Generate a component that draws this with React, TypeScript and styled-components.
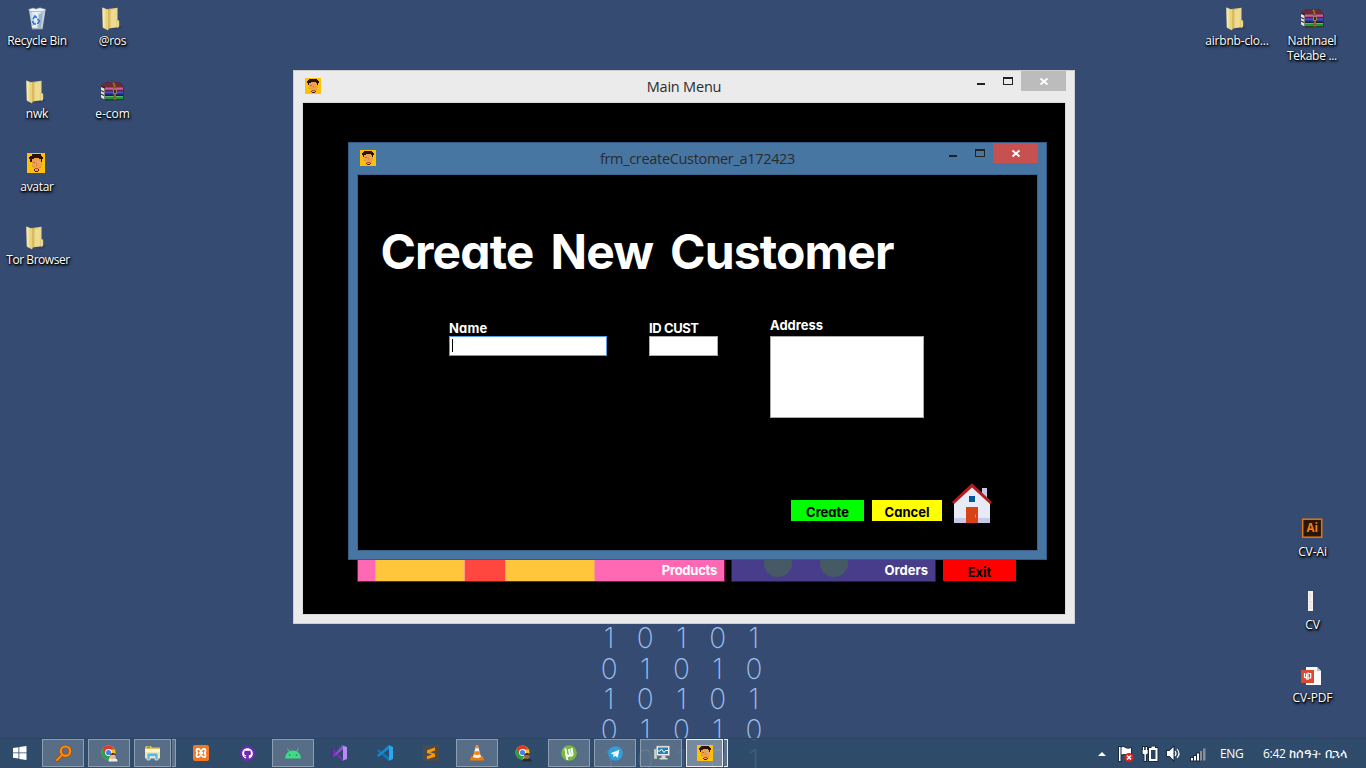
import React from "react";
import styled, { createGlobalStyle, css } from "styled-components";
import { FaGithub } from "react-icons/fa";

const GlobalStyle = createGlobalStyle`
  * { box-sizing: border-box; }
  body { margin: 0; background: #364b72; overflow: hidden; }
`;

const uiFont = `"Open Sans", "Noto Sans", sans-serif`;
const geoFont = css`
  font-family: Inter, "Liberation Sans", sans-serif;
  font-feature-settings: "cv11", "ss03";
  font-weight: 700;
`;

const Desktop = styled.main`
  position: relative;
  width: 1366px;
  height: 768px;
  overflow: hidden;
  background: #364b72;
  font-family: ${uiFont};
`;

const Digits = styled.div`
  position: absolute;
  left: 591px;
  top: 624px;
  display: grid;
  grid-template-columns: repeat(5, 36.2px);
  grid-auto-rows: 30.5px;
  font: 200 28px/29px Inter, sans-serif;
  color: #9dc0ee;
  text-align: center;
`;

/* Desktop shortcuts */

const Shortcut = styled.div<{ $x: number; $y: number }>`
  position: absolute;
  left: ${(p) => p.$x - 45}px;
  top: ${(p) => p.$y}px;
  width: 90px;
  display: flex;
  flex-direction: column;
  align-items: center;
`;

const ShortcutIcon = styled.div<{ $shift?: number }>`
  width: 24px;
  height: 25px;
  padding-top: 1px;
  margin-right: ${(p) => (p.$shift ?? 0) * 2}px;
  svg { display: block; }
`;

const ShortcutLabel = styled.span<{ $ls: number }>`
  margin-top: 2px;
  font-size: 12px;
  line-height: 15px;
  letter-spacing: ${(p) => p.$ls}px;
  color: #fff;
  text-align: center;
  white-space: pre;
  text-shadow: 0 1px 2px #000, 1px 1px 2px #000, 1px 2px 3px rgba(0, 0, 0, 0.6);
`;

/* Windows */

const Window = styled.section<{ $active?: boolean; $x: number; $y: number; $w: number; $h: number }>`
  position: absolute;
  left: ${(p) => p.$x}px;
  top: ${(p) => p.$y}px;
  width: ${(p) => p.$w}px;
  height: ${(p) => p.$h}px;
  display: flex;
  flex-direction: column;
  padding: 0 8px 8px;
  background: ${(p) => (p.$active ? "#4776a3" : "#ebebeb")};
  border: 1px solid ${(p) => (p.$active ? "#335c85" : "#cfcfcf")};
`;

const TitleBar = styled.header`
  display: grid;
  grid-template-columns: 135px 1fr 135px;
  height: 31px;
  flex: none;
`;

const TitleIcon = styled.div`
  padding: 7px 0 0 3px;
  svg { display: block; }
`;

const Title = styled.h2<{ $ls: number }>`
  margin: 0;
  font-size: 14.5px;
  font-weight: 400;
  line-height: 32px;
  letter-spacing: ${(p) => p.$ls}px;
  color: #2b2b2b;
  text-align: center;
  white-space: nowrap;
`;

const Controls = styled.div`
  display: flex;
  justify-content: flex-end;
  height: 20px;
`;

const ControlButton = styled.div<{ $w: number; $bg?: string }>`
  width: ${(p) => p.$w}px;
  height: 20px;
  background: ${(p) => p.$bg ?? "transparent"};
  svg { display: block; }
`;

const WindowBody = styled.div<{ $line: string }>`
  flex: 1;
  display: flex;
  flex-direction: column;
  border: 1px solid ${(p) => p.$line};
  background: #000;
`;

/* Main menu tiles */

const TileRow = styled.div`
  display: flex;
  margin-top: auto;
  padding: 0 0 32px 54px;
  gap: 6px;
`;

const Tile = styled.div<{ $w: number; $bg: string; $line: string }>`
  position: relative;
  width: ${(p) => p.$w}px;
  height: 42px;
  display: flex;
  justify-content: flex-end;
  background: ${(p) => p.$bg};
  border: solid ${(p) => p.$line};
  border-width: 0 1px 1px;
  overflow: hidden;
`;

const Stripe = styled.div<{ $w: number; $bg: string }>`
  width: ${(p) => p.$w}px;
  background: ${(p) => p.$bg};
  border-left: 1px solid #ff9b7e;
`;

const Stripes = styled.div`
  display: flex;
  margin: 0 auto 0 17px;
`;

const Wheel = styled.div`
  width: 28px;
  height: 28px;
  margin-top: 9px;
  border-radius: 50%;
  background: #455a64;
`;

const Wheels = styled.div`
  display: flex;
  gap: 28px;
  margin: 0 auto 0 32px;
`;

const TileText = styled.span<{ $ls?: number }>`
  ${geoFont}
  font-size: 13px;
  line-height: 16px;
  letter-spacing: ${(p) => p.$ls ?? 0}px;
  align-self: flex-end;
  padding: 0 7px 3px 0;
  color: #fff;
`;

const ExitTile = styled.div`
  ${geoFont}
  width: 73px;
  height: 41px;
  margin-left: 1px;
  display: flex;
  align-items: flex-end;
  justify-content: center;
  font-size: 13px;
  line-height: 16px;
  padding-bottom: 1px;
  background: #f00;
  color: #000;
`;

/* Customer form */

const FormTitle = styled.h1`
  ${geoFont}
  margin: 47px 0 0 22.5px;
  font-size: 48px;
  line-height: 60px;
  letter-spacing: -0.9px;
  word-spacing: 6.5px;
  color: #fff;
  white-space: nowrap;
`;

const Fields = styled.div`
  display: flex;
  margin: 34px 0 0 91px;
`;

const Field = styled.label<{ $gap: number; $lift?: number; $ls?: number }>`
  ${geoFont}
  display: flex;
  flex-direction: column;
  margin-right: ${(p) => p.$gap}px;
  font-size: 13px;
  line-height: 16px;
  letter-spacing: ${(p) => p.$ls ?? 0}px;
  color: #fff;
  span {
    display: block;
    height: 20px;
    padding-top: ${(p) => 4 - (p.$lift ?? 0)}px;
    white-space: nowrap;
  }
`;

const Input = styled.div<{ $w: number; $h: number; $focus?: boolean }>`
  width: ${(p) => p.$w}px;
  height: ${(p) => p.$h}px;
  padding: 2px;
  background: #fff;
  border: 1px solid ${(p) => (p.$focus ? "#569de5" : "#ababab")};
`;

const Caret = styled.div`
  width: 1px;
  height: 13px;
  background: #000;
`;

const Actions = styled.div`
  display: flex;
  align-items: flex-start;
  margin: 61px 0 0 433px;
`;

const ActionButton = styled.div<{ $w: number; $bg: string }>`
  ${geoFont}
  width: ${(p) => p.$w}px;
  height: 21px;
  margin: 21px 8px 0 0;
  padding-top: 4px;
  font-size: 13px;
  line-height: 16px;
  text-align: center;
  background: ${(p) => p.$bg};
  color: #000;
`;

const HomeButton = styled.div`
  margin-left: -2px;
  svg { display: block; }
`;

/* Taskbar */

const Taskbar = styled.footer`
  position: absolute;
  left: 0;
  right: 0;
  bottom: 0;
  height: 30px;
  display: flex;
  background: linear-gradient(rgba(45, 76, 107, 0.84), rgba(46, 75, 103, 0.82));
  border-top: 1px solid #2b4462;
`;

const Start = styled.div`
  width: 40px;
  padding: 7px 0 0 13px;
  svg { display: block; }
`;

const Slot = styled.div`
  width: 46px;
  height: 29px;
  padding: 0 2px;
  display: flex;
`;

const TaskButton = styled.div<{ $open?: boolean; $active?: boolean; $stack?: boolean }>`
  width: ${(p) => (p.$stack ? 38 : 42)}px;
  height: 28px;
  display: flex;
  align-items: center;
  justify-content: center;
  border: 1px solid ${(p) => (p.$active ? "#e9edf2" : p.$open ? "#8d9db2" : "transparent")};
  background: ${(p) => (p.$active ? "rgba(190,200,212,.5)" : p.$open ? "rgba(160,170,185,.36)" : "none")};
  svg { display: block; }
`;

const StackEdge = styled.div<{ $active?: boolean }>`
  width: 4px;
  height: 28px;
  border: 1px solid ${(p) => (p.$active ? "#e9edf2" : "#8d9db2")};
  border-left: 0;
  margin-left: 1px;
  background: rgba(160, 170, 185, 0.4);
`;

const Tray = styled.div`
  display: flex;
  margin-left: auto;
  height: 29px;
  align-items: center;
  color: #fff;
`;

const TrayGlyphs = styled.div`
  margin-right: 14px;
  svg { display: block; }
`;

const TrayText = styled.span<{ $w: number; $gap: number; $ls: number }>`
  width: ${(p) => p.$w}px;
  margin-right: ${(p) => p.$gap}px;
  font-size: 12px;
  line-height: 29px;
  letter-spacing: ${(p) => p.$ls}px;
  white-space: nowrap;
`;

const Amharic = styled.span`
  margin-left: 1px;
  font-size: 12.5px;
  letter-spacing: 0;
`;

/* Icons */

const Avatar = ({ w = 16, h = 16 }: { w?: number; h?: number }) => (
  <svg width={w} height={h} viewBox="0 0 16 16" preserveAspectRatio="none" shapeRendering="crispEdges">
    <rect width="16" height="16" fill="#ffc107" />
    <path d="M4 4h9v6h-1v2h-1v2h-1v1H7v-1H6v-2H5v-2H4z" fill="#f0a04c" />
    <path d="M3 7V5H2V3h1V2h1V1h8v1h1v1h1v2h-1v2h-1V5h-1V4H6v1H4v2z" fill="#2b1208" />
    <path d="M5 7h2v1H5z" fill="#c06a2c" />
    <path d="M9 7h3v1H9z" fill="#e0b07a" />
    <path d="M8 7h1v3H8z" fill="#e08c3a" />
    <path d="M4 10h1v1H4zM11 11h1v1h-1z" fill="#d98a38" />
    <path d="M7 12h3v1H7z" fill="#a65a2a" />
    <path d="M6 13h1v1H6zM10 13h1v1h-1zM7 14h3v1H7z" fill="#4a2412" />
  </svg>
);

const Folder = () => (
  <svg width="24" height="24" viewBox="0 0 24 24">
    <defs>
      <linearGradient id="fold" x1="0" x2="1">
        <stop offset="0" stopColor="#fdf2b4" />
        <stop offset="1" stopColor="#e2c667" />
      </linearGradient>
      <linearGradient id="foldBack" x1="0" x2="1">
        <stop offset="0" stopColor="#b99c4a" />
        <stop offset="1" stopColor="#f3e4a0" />
      </linearGradient>
    </defs>
    <path d="M19 19l4 1-6 3-7-1z" fill="#26385a" opacity=".5" />
    <path d="M7 2L17.500 .8V13l1.500 1v6L9 21.500z" fill="url(#foldBack)" />
    <path d="M9.500 2.800l7-1V20l-7 1z" fill="#eedb92" />
    <path d="M17 13l2 1v5.500L17 21z" fill="#f5e6a2" stroke="#c4a852" strokeWidth=".5" />
    <path d="M2.500 .8L8 3v20L3 20.500z" fill="url(#fold)" stroke="#f8ecb0" strokeWidth=".5" />
    <path d="M8 3l2.500-.5V20L8 22.500z" fill="#d9bc62" />
  </svg>
);

const RecycleBin = () => (
  <svg width="24" height="24" viewBox="0 0 24 24">
    <path d="M4 3l16.500 0L17.500 22H7z" fill="#c5d3df" />
    <path d="M7 4l2 17h3l1-14 5-3z" fill="#e9f0f5" opacity=".8" />
    <path d="M14 8l4-3-2 16h-3z" fill="#8fa6bb" opacity=".7" />
    <path d="M3.500 2.500L8 1l3 1 4-1.200 6 1.700-2 1.800-14 .2z" fill="#f2f6f8" stroke="#8496a8" strokeWidth=".6" />
    <path d="M7 10l5 2M10 5l3 6M13 18l2-5M7 20l5-2" stroke="#fff" strokeWidth=".9" />
    <path d="M8 12l2-3 2 2M7.500 14l1.500 3h2M12.500 17l2-3-2-2" fill="none" stroke="#2f74cf" strokeWidth="1.700" />
    <path d="M7 22h10.500" stroke="#7b8b9b" />
  </svg>
);

const Archive = () => (
  <svg width="24" height="24" viewBox="0 0 24 24">
    <path d="M1 6l4-3.500h15L23.500 7v13l-18 .5L1 17z" fill="#2a1c22" />
    <path d="M1 6l4-3.500h15L23.500 7H4z" fill="#6c2a36" />
    <path d="M1 7l3.500 1.500v11L1 17.500z" fill="#e3e3e3" />
    <path d="M1 10.500l3 1.500M1 14l3 1.500" stroke="#35303a" strokeWidth="1.300" />
    <path d="M5 7.500h18v2.800H5z" fill="#c2458f" />
    <path d="M5 11.500h18v3H5z" fill="#2535c6" />
    <path d="M5 16h18v3.300H5z" fill="#1e9a35" />
    <path d="M5 8h18M5 12h18M5 16.500h18" stroke="#fff" strokeOpacity=".35" strokeWidth=".8" />
    <path d="M12 2.500h3l1 4.500v13h-2.500V7z" fill="#7c4b22" />
    <path d="M13.500 3l1.500 5v11" stroke="#c69440" strokeDasharray="1.500 1" fill="none" />
    <path d="M13.500 9.500h3v4h-3z" fill="#3d2a1c" stroke="#b89e5b" strokeWidth=".7" />
  </svg>
);

const Illustrator = () => (
  <svg width="24" height="24" viewBox="0 0 24 24">
    <rect x="2.700" y="1.200" width="19" height="18" fill="#2b1503" stroke="#dd7718" strokeWidth="1.500" />
    <text x="12.200" y="14" textAnchor="middle" fontFamily="Open Sans" fontWeight="700" fontSize="11.500" fill="#f57f17">Ai</text>
  </svg>
);

const Strip = () => (
  <svg width="24" height="24" viewBox="0 0 24 24">
    <rect x="8" y="0" width="5" height="20" fill="#f5f2f2" />
    <path d="M9 3h2M9 5h3M9 8h2M9 11h3M9 14h2M9 17h3" stroke="#d4cdcd" strokeWidth=".7" />
  </svg>
);

const PdfFile = () => (
  <svg width="24" height="24" viewBox="0 0 24 24">
    <path d="M6 3h11l4 4v14H6z" fill="#fafafa" />
    <path d="M17 3l4 4h-4z" fill="#b9c0cb" />
    <rect x="1" y="6" width="13" height="13" fill="#d84b2f" />
    <path d="M4.500 9v5M6.500 9.500v6M8 8.500v7.500M8 9.500h2.700v4.500H8M4.500 13.500h2" fill="none" stroke="#fff" strokeWidth="1.200" />
  </svg>
);

const House = () => (
  <svg width="48" height="44" viewBox="0 0 48 44">
    <path d="M42 39H6V23L24 6l18 17z" fill="#e8eaf6" />
    <path d="M39 21l-5-5V9h5zM6 39h36v5H6z" fill="#c5cae9" />
    <path d="M24 4.300L4 22.900l2 2.200L24 8.400l18 16.700 2-2.200z" fill="#b71c1c" />
    <path d="M18 28h12v16H18z" fill="#d84315" />
    <path d="M21 17h6v6h-6z" fill="#01579b" />
    <rect x="27" y="35.500" width="1" height="3" rx=".5" fill="#ff8a65" />
  </svg>
);

const Minimise = () => (
  <svg width="27" height="20"><path d="M9 13h8" stroke="#222" strokeWidth="2" /></svg>
);
const Maximise = () => (
  <svg width="26" height="20" shapeRendering="crispEdges">
    <path d="M8.500 7.500h9v6h-9z" fill="none" stroke="#222" />
    <path d="M8 6h10v2H8z" fill="#222" />
  </svg>
);
const CloseMark = () => (
  <svg width="45" height="20"><path d="M19.500 7.500l7 6M26.500 7.500l-7 6" stroke="#fff" strokeWidth="1.800" /></svg>
);

const WindowsLogo = () => (
  <svg width="14" height="14" viewBox="0 0 14 14" fill="#fff">
    <path d="M0 2l5.500-.8v5.300H0zM6.300 1.100L13.500 0v6.500H6.300zM0 7.300h5.500v5.300L0 11.800zM6.300 7.300h7.200V14l-7.200-1.100z" />
  </svg>
);

const Finder = () => (
  <svg width="17" height="17" viewBox="0 0 17 17" fill="none">
    <path d="M7 10L2 15" stroke="#a34a00" strokeWidth="3.400" strokeLinecap="round" />
    <circle cx="10.500" cy="6.200" r="4.700" stroke="#a34a00" strokeWidth="3.200" />
    <path d="M7 10L2 15" stroke="#ff8a10" strokeWidth="2" strokeLinecap="round" />
    <circle cx="10.500" cy="6.200" r="4.700" stroke="#ff8a10" strokeWidth="2.200" />
  </svg>
);

const Chrome = ({ shirt, skin }: { shirt: string; skin: string }) => (
  <svg width="17" height="17" viewBox="0 0 17 17">
    <circle cx="7.500" cy="7.500" r="7" fill="#fbc116" />
    <path d="M1.440 4A7 7 0 0 0 7.500 14.500L9.500 10 6 9z" fill="#29a04a" />
    <path d="M1.440 4A7 7 0 0 1 13.560 4.500H7.500L4.500 9z" fill="#e0392b" />
    <circle cx="7.500" cy="7.500" r="3.400" fill="#fff" />
    <circle cx="7.500" cy="7.500" r="2.600" fill="#3f82ee" />
    <path d="M7.500 16.500c0-3 2-3.500 4.500-3.500s4.500.5 4.500 3.500z" fill={shirt} />
    <circle cx="12" cy="11.200" r="2.700" fill={skin} />
    <path d="M9 11c0-4 6-4 6 0l-1-1.200h-4z" fill="#2c1b16" />
  </svg>
);

const Explorer = () => (
  <svg width="17" height="16" viewBox="0 0 17 16">
    <path d="M1 2.500L2 1h5l1 1.500h8v10H1z" fill="#dcc067" />
    <path d="M3 1.500h3v1.500H3z" fill="#4caf50" />
    <path d="M1 4h15v9.500H1z" fill="#f6e7a0" />
    <path d="M1 4h15v3H1z" fill="#fdf5c8" />
    <path d="M3 15V9.500Q3 8 4.500 8h8Q14 8 14 9.500V15h-3v-3.500H6V15z" fill="#61b6e8" stroke="#d9f0fc" strokeWidth=".7" />
  </svg>
);

const Xampp = () => (
  <svg width="16" height="16" viewBox="0 0 16 16" fill="none">
    <rect width="16" height="16" rx="2" fill="#f37623" />
    <path d="M3.500 5.500V5Q3.500 3.800 5 3.800q1.200 0 1.700 1L8 6.500l1.300-1.700q.5-1 1.700-1 1.500 0 1.500 1.400Q12.500 7 11.500 8q1 .8 1 2.500 0 1.700-1.500 1.700-1.200 0-1.700-1L8 9.500l-1.300 1.700q-.5 1-1.700 1-1.500 0-1.500-1.700Q3.500 8.800 4.500 8q-1-.8-1-2.500zM6 8h4" stroke="#fff" strokeWidth="1.800" strokeLinejoin="round" />
  </svg>
);

const GithubBadge = styled.div`
  width: 15px;
  height: 15px;
  display: flex;
  align-items: center;
  justify-content: center;
  border-radius: 50%;
  background: #6e2cab;
  color: #fff;
`;

const Android = () => (
  <svg width="18" height="16" viewBox="0 0 18 16">
    <path d="M1 13.500a8 8 0 0 1 16 0z" fill="#3ddc84" />
    <path d="M5.500 7L3.500 3.500M12.500 7l2-3.500" stroke="#3ddc84" strokeWidth=".9" />
    <circle cx="5.500" cy="10" r=".8" fill="#3b5f72" />
    <circle cx="12.500" cy="10" r=".8" fill="#3b5f72" />
  </svg>
);

const VisualStudio = () => (
  <svg width="16" height="16" viewBox="0 0 16 16">
    <path d="M0 4.200L1.500 3.600 12 13.500V16L11 15.800 4 9.500 1.500 12.300 0 11.800z" fill="#6c33af" />
    <path d="M0 11.800V4.200l1.500-.6V12.300z" fill="#52218a" />
    <path d="M1.500 12.300L11 .2 12 0v4.500L5 10z" fill="#8950cc" />
    <path d="M11 .2L16 2v12l-5 1.900c.700-.2 1-.5 1-1V1C12 .6 11.700.3 11 .2z" fill="#b98af0" />
  </svg>
);

const VsCode = () => (
  <svg width="16" height="16" viewBox="0 0 16 16">
    <path d="M.4 5.200l1.200-1 10.400 8V16L.4 6z" fill="#0d78bd" />
    <path d="M.4 10.900l1.200 1L12 4V0L.4 10z" fill="#1389ce" />
    <path d="M11.500 0L16 2v12l-4.500 2c.400-.2.500-.5.500-1V1c0-.5-.1-.8-.5-1z" fill="#29a8f2" />
  </svg>
);

const Sublime = () => (
  <svg width="16" height="16" viewBox="0 0 16 16">
    <rect width="16" height="16" rx="1" fill="#4b4b4b" />
    <path d="M4 5.200L12 2.600v3L7 7.200l5 1.500v3L4 14.200v-3l5-1.600-5-1.500z" fill="#ff9800" />
  </svg>
);

const Vlc = () => (
  <svg width="16" height="16" viewBox="0 0 16 16">
    <path d="M1 14.500L2.500 11h11l1.500 3.500v1H1z" fill="#ef7b0b" />
    <path d="M7 .5h2L12 12q-4 2-8 0z" fill="#f4f4f4" />
    <path d="M7 .5h2l.7 2.800H6.300zM5.500 6.300h5l.7 3q-3.200 1.400-6.400 0z" fill="#f58412" />
  </svg>
);

const Utorrent = () => (
  <svg width="16" height="16" viewBox="0 0 16 16">
    <circle cx="8" cy="8" r="7.800" fill="#75b943" />
    <path d="M4.300 3.500l1 5.500c.5 3 3.900 2.500 3.500-.5L8 4M8.800 8.500c.5 3 2.800 2.500 2.700.5l-1-6" fill="none" stroke="#fff" strokeWidth="2" />
    <path d="M5 9l1.500 6" stroke="#fff" strokeWidth="1.700" />
  </svg>
);

const Telegram = () => (
  <svg width="15" height="15" viewBox="0 0 15 15">
    <circle cx="7.500" cy="7.500" r="7.300" fill="#2ca1de" />
    <path d="M2.700 7.300l8.600-3.600-1.500 8-2.500-1.900-1.500 1.500-.5-2.700z" fill="#fff" />
    <path d="M5.300 8.600L10 5.200 6.400 9.200l-.6 2.100z" fill="#bddff1" />
  </svg>
);

const Monitor = () => (
  <svg width="17" height="16" viewBox="0 0 17 16">
    <path d="M1 4h3v10H1z" fill="#cdd5c9" stroke="#7d8985" strokeWidth=".5" />
    <path d="M3.500 1h13v9.500h-13z" fill="#f0f0ec" stroke="#9da5a9" strokeWidth=".6" />
    <path d="M5 2.500h10V9H5z" fill="#2580b7" />
    <path d="M5 6h2l1.500-2L11 7.500l1.500-2H15" fill="none" stroke="#eff" strokeWidth="1" />
    <path d="M8.500 10.500h4V13h2v1.500h-8V13h2z" fill="#d6dad7" />
  </svg>
);

const TrayIcons = () => (
  <svg width="116" height="29" viewBox="0 0 116 29">
    <path d="M8 17l4-4 4 4z" fill="#fff" />
    <g stroke="#17283b" strokeWidth="1.800" paintOrder="stroke" fill="#fff">
      <path d="M29 8h1.500v14H29zM31.500 8.500c2-1 3 0 4.500.7s3 .6 5-.2v7c-2 .8-3.500 0-5-.6s-2.500-.6-4.500.2z" />
      <path d="M59 9h2.500V7.500h3.500V9h2.500v13H59z" />
      <path d="M53 8h1.200v3h1.500V8H57v3h.7v3.500l-1.800 1V22h-1.400v-6.500l-1.900-1V11h.4z" />
      <path d="M77 12h2.500L83.500 8v13l-4-4H77z" />
      <path d="M101 19h2v2.500h-2zM104 17h2v4.500h-2zM107 14.500h2v7h-2z" />
    </g>
    <path d="M61 11h4.500v9H61z" fill="#294460" />
    <path d="M85 12q2 2.500 0 5M87 10q4 4.500 0 9" fill="none" stroke="#fff" strokeWidth="1.100" />
    <path d="M110 12h2v9.500h-2zM113 9.500h2.500v12H113z" fill="#8d8d8d" />
    <circle cx="39" cy="18.500" r="4.600" fill="#de2020" />
    <path d="M37 16.500l4 4M41 16.500l-4 4" stroke="#fff" strokeWidth="1.500" />
  </svg>
);

function AvatarShortcut() {
  return (
    <svg width="24" height="24" viewBox="0 0 24 24">
      <svg x="2" y="0">
        <Avatar w={18} h={20} />
      </svg>
    </svg>
  );
}

const shortcuts = [
  { x: 37, y: 6, label: "Recycle Bin", icon: <RecycleBin />, shift: 0, ls: -0.28 },
  { x: 112.500, y: 6, label: "@ros", icon: <Folder />, shift: 1, ls: -0.3 },
  { x: 37, y: 79, label: "nwk", icon: <Folder />, shift: 1, ls: -0.2 },
  { x: 112.500, y: 79, label: "e-com", icon: <Archive />, shift: 0.500, ls: 0 },
  { x: 37, y: 152, label: "avatar", icon: <AvatarShortcut />, shift: 0, ls: -0.3 },
  { x: 38, y: 225, label: "Tor Browser", icon: <Folder />, shift: 2, ls: -0.45 },
  { x: 1237, y: 6, label: "airbnb-clo...", icon: <Folder />, shift: 1, ls: -0.2 },
  { x: 1312, y: 6, label: "Nathnael\nTekabe ...", icon: <Archive />, shift: 0, ls: -0.3 },
  { x: 1312.500, y: 517, label: "CV-Ai", icon: <Illustrator />, shift: 0.500, ls: -0.1 },
  { x: 1312.500, y: 590, label: "CV", icon: <Strip />, shift: 0.500, ls: -0.2 },
  { x: 1312.500, y: 663, label: "CV-PDF", icon: <PdfFile />, shift: 0.500, ls: -0.15 },
];

type Task = { icon: React.ReactNode; open?: boolean; active?: boolean; stack?: boolean };

const tasks: Task[] = [
  { icon: <Finder />, open: true },
  { icon: <Chrome shirt="#ececec" skin="#e8b796" />, open: true },
  { icon: <Explorer />, open: true, stack: true },
  { icon: <Xampp /> },
  { icon: <GithubBadge><FaGithub size={11} /></GithubBadge> },
  { icon: <Android />, open: true },
  { icon: <VisualStudio /> },
  { icon: <VsCode /> },
  { icon: <Sublime /> },
  { icon: <Vlc />, open: true },
  { icon: <Chrome shirt="#2b2b2b" skin="#8d6a5a" /> },
  { icon: <Utorrent />, open: true },
  { icon: <Telegram />, open: true },
  { icon: <Monitor />, open: true },
  { icon: <Avatar />, open: true, active: true, stack: true },
];

const bits = Array.from({ length: 25 }, (_, i) => (i % 2 === 0 ? "1" : "0"));

const WindowHeader = ({ title, ls, closeColor }: { title: string; ls: number; closeColor: string }) => (
  <TitleBar>
    <TitleIcon><Avatar /></TitleIcon>
    <Title $ls={ls}>{title}</Title>
    <Controls>
      <ControlButton $w={27}><Minimise /></ControlButton>
      <ControlButton $w={26}><Maximise /></ControlButton>
      <ControlButton $w={45} $bg={closeColor}><CloseMark /></ControlButton>
    </Controls>
  </TitleBar>
);

export default function App() {
  return (
    <Desktop>
      <GlobalStyle />
      <Digits>{bits.map((b, i) => <span key={i}>{b}</span>)}</Digits>

      {shortcuts.map((s) => (
        <Shortcut key={s.label} $x={s.x} $y={s.y}>
          <ShortcutIcon $shift={s.shift}>{s.icon}</ShortcutIcon>
          <ShortcutLabel $ls={s.ls}>{s.label}</ShortcutLabel>
        </Shortcut>
      ))}

      <Window $x={293} $y={70} $w={782} $h={554}>
        <WindowHeader title="Main Menu" ls={-0.2} closeColor="#bcbcbc" />
        <WindowBody $line="#dadada">
          <TileRow>
            <Tile $w={368} $bg="#ff69b4" $line="#8b0f50">
              <Stripes>
                <Stripe $w={89} $bg="#ffc63c" />
                <Stripe $w={41} $bg="#ff463f" />
                <Stripe $w={89} $bg="#ffc63c" />
                <Stripe $w={1} $bg="#ff69b4" />
              </Stripes>
              <TileText $ls={-0.25}>Products</TileText>
            </Tile>
            <Tile $w={205} $bg="#483d8b" $line="#241c50">
              <Wheels><Wheel /><Wheel /></Wheels>
              <TileText>Orders</TileText>
            </Tile>
            <ExitTile>Exit</ExitTile>
          </TileRow>
        </WindowBody>
      </Window>

      <Window $active $x={348} $y={142} $w={699} $h={418}>
        <WindowHeader title="frm_createCustomer_a172423" ls={-0.32} closeColor="#c75050" />
        <WindowBody $line="#3a648e">
          <FormTitle>Create New Customer</FormTitle>
          <Fields>
            <Field $gap={42} $ls={0.2}>
              <span>Name</span>
              <Input $w={158} $h={20} $focus><Caret /></Input>
            </Field>
            <Field $gap={52} $ls={-0.4}>
              <span>ID CUST</span>
              <Input $w={69} $h={20} />
            </Field>
            <Field $gap={0} $lift={3}>
              <span>Address</span>
              <Input $w={154} $h={82} />
            </Field>
          </Fields>
          <Actions>
            <ActionButton $w={73} $bg="#0f0">Create</ActionButton>
            <ActionButton $w={70} $bg="#ff0">Cancel</ActionButton>
            <HomeButton><House /></HomeButton>
          </Actions>
        </WindowBody>
      </Window>

      <Taskbar>
        <Start><WindowsLogo /></Start>
        {tasks.map((t, i) => (
          <Slot key={i}>
            <TaskButton $open={t.open} $active={t.active} $stack={t.stack}>{t.icon}</TaskButton>
            {t.stack && <StackEdge $active={t.active} />}
          </Slot>
        ))}
        <Tray>
          <TrayGlyphs><TrayIcons /></TrayGlyphs>
          <TrayText $w={24} $gap={19} $ls={-0.4}>ENG</TrayText>
          <TrayText $w={82} $gap={21} $ls={-0.3}>6:42 <Amharic>ከሰዓት በኋላ</Amharic></TrayText>
        </Tray>
      </Taskbar>
    </Desktop>
  );
}
